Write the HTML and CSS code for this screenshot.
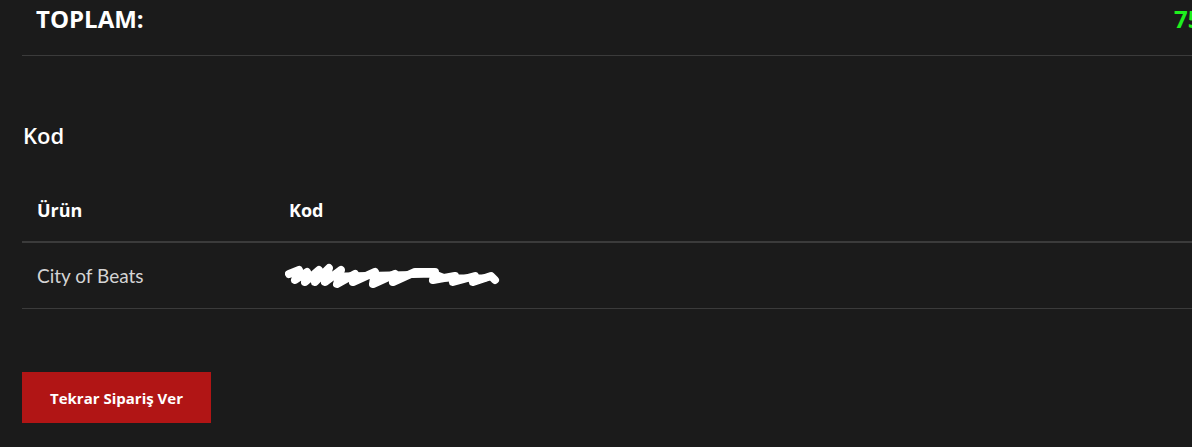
FILE: index.html
```html
<!DOCTYPE html>
<html lang="tr">
<head>
<meta charset="utf-8">
<link rel="stylesheet" href="styles.css">
</head>
<body>
<div class="page">
  <div class="total-row">
    <span class="total-label">TOPLAM:</span>
    <span class="total-value">75,00 ₺</span>
  </div>

  <h2 class="section-title">Kod</h2>

  <table class="codes">
    <thead>
      <tr><th class="col-product">Ürün</th><th>Kod</th></tr>
    </thead>
    <tbody>
      <tr>
        <td class="col-product">City of Beats</td>
        <td>
          <svg class="scribble" width="216" height="28" viewBox="0 0 216 28">
            <path d="M4 12 L14 8 L10 18 L22 10 L20 20 L34 8 L30 20 L44 6 L40 20 L56 8 L52 22 L70 12 L68 20 L90 10 L88 22 L110 12 L108 20 L130 10 L150 10 L148 18 L170 14 L168 20 L190 14 L188 20 L206 14 L210 18" fill="none" stroke="#fff" stroke-width="8" stroke-linecap="round" stroke-linejoin="round"/>
            <path d="M60 14 L150 12 L160 16 L200 16" fill="none" stroke="#fff" stroke-width="7" stroke-linecap="round"/>
          </svg>
        </td>
      </tr>
    </tbody>
  </table>

  <button class="reorder">Tekrar Sipariş Ver</button>
</div>
</body>
</html>
```

FILE: styles.css
```css
html, body {
  margin: 0;
  padding: 0;
  background: #1b1b1b;
  overflow: hidden;
}

.page {
  width: 1260px;
  padding-left: 22px;
  font-family: "Open Sans", sans-serif;
  color: #fff;
}

.total-row {
  display: flex;
  justify-content: space-between;
  height: 56px;
  box-sizing: border-box;
  padding: 1px 14px 0 14px;
  border-bottom: 1px solid #3b3b3b;
}

.total-label {
  font-size: 24px;
  font-weight: 700;
  line-height: 36px;
}

.total-value {
  font-size: 24px;
  font-weight: 700;
  line-height: 36px;
  color: #1ef01e;
  margin-right: 12px;
}

.section-title {
  margin: 64px 0 0 1px;
  font-size: 22px;
  font-weight: 600;
  line-height: 30px;
}

.codes {
  width: 100%;
  border-collapse: collapse;
  margin-top: 29px;
}

.codes th {
  text-align: left;
  font-size: 18px;
  font-weight: 700;
  height: 62px;
  padding: 0 14px;
  border-bottom: 2px solid #3b3b3b;
  vertical-align: middle;
}

.codes td {
  height: 65px;
  padding: 0 14px;
  border-bottom: 1px solid #3b3b3b;
  font-family: Lato, "Open Sans", sans-serif;
  font-size: 19px;
  color: #d4d4d4;
  vertical-align: middle;
}

.codes .col-product {
  width: 224px;
  padding-left: 15px;
}

.scribble {
  display: block;
  margin-left: -4px;
}

.reorder {
  display: block;
  margin-top: 63px;
  width: 189px;
  height: 51px;
  border: 0;
  background: #b11515;
  color: #fff;
  font-family: "Open Sans", sans-serif;
  font-size: 15px;
  font-weight: 700;
  cursor: pointer;
}
```
